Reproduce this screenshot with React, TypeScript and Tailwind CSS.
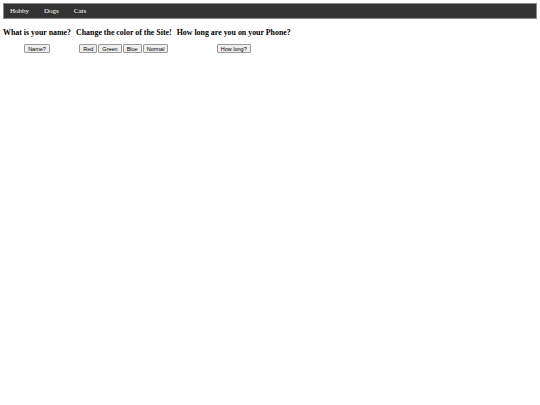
import React from 'react';

const questions = [
  { title: 'What is your name?', buttons: ['Name?'] },
  { title: 'Change the color of the Site!', buttons: ['Red', 'Green', 'Blue', 'Normal'] },
  { title: 'How long are you on your Phone?', buttons: ['How long?'] },
];

export default function App() {
  return (
    <div className="min-h-[405px] bg-white p-[3px] font-['Liberation_Serif',serif]">
      {/* top nav */}
      <nav className="flex h-[16px] items-center gap-[15px] border border-[#8a8a8a] bg-[#333333] px-[6px] text-[7px] text-white">
        <span>Hobby</span>
        <span>Dogs</span>
        <span>Cats</span>
      </nav>

      <div className="mt-[9px] flex gap-[5px]">
        {questions.map((q) => (
          <div key={q.title} className="flex flex-col items-center">
            <h3 className="text-[7.9px] font-bold leading-[10px] text-black">{q.title}</h3>
            <div className="mt-[6px] flex gap-[1px]">
              {q.buttons.map((b) => (
                <button
                  key={b}
                  className="h-[9px] rounded-[1px] border border-[#9a9a9a] bg-[#efefef] px-[3px] font-['Liberation_Sans',sans-serif] text-[5.5px] leading-[6px] text-black"
                >
                  {b}
                </button>
              ))}
            </div>
          </div>
        ))}
      </div>
    </div>
  );
}
